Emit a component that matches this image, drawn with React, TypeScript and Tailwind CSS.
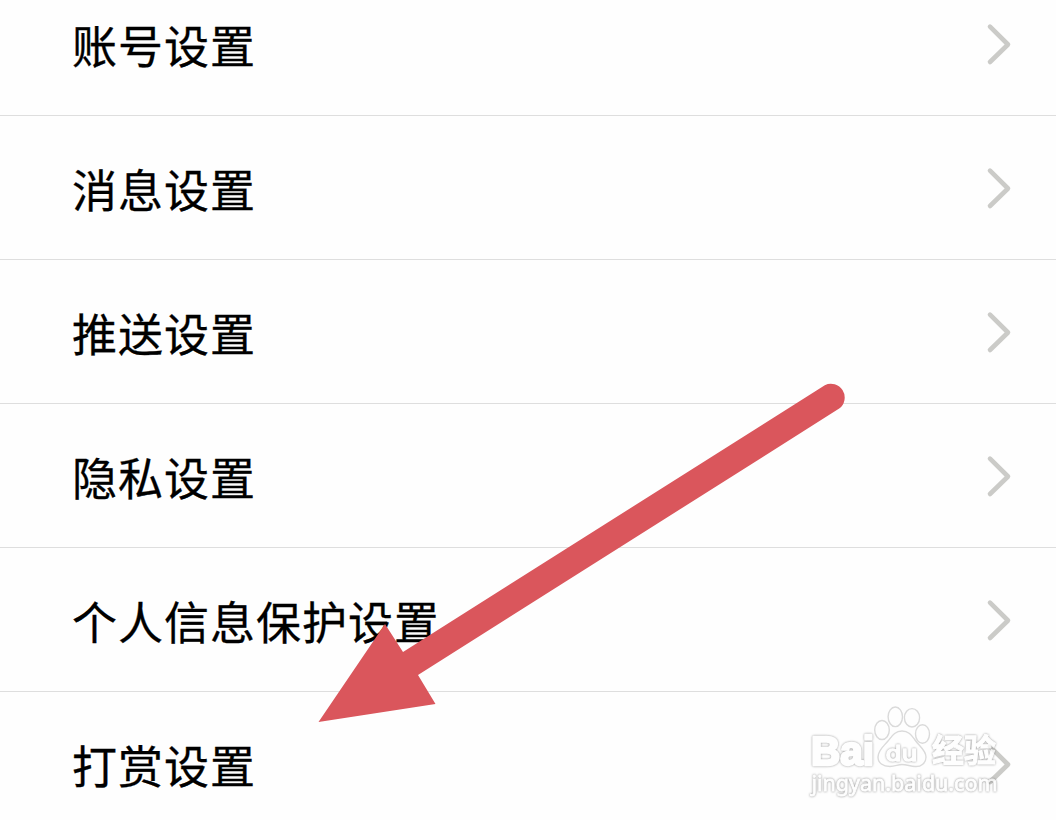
import { clsx } from "clsx";

const items = [
  "账号设置",
  "消息设置",
  "推送设置",
  "隐私设置",
  "个人信息保护设置",
  "打赏设置",
];

const Chevron = () => (
  <svg className="h-11 w-7" viewBox="0 0 28 44" fill="none">
    <path
      d="M6 4.7 L24 22.5 L6 40"
      stroke="#cbcbc8"
      strokeWidth="4.6"
      strokeLinecap="round"
      strokeLinejoin="round"
    />
  </svg>
);

const SettingRow = ({ label, last }: { label: string; last: boolean }) => (
  <button
    type="button"
    className={clsx(
      "flex h-36 w-full shrink-0 items-center justify-between border-b pl-[72px] pr-11 text-left",
      last ? "border-transparent" : "border-[#dedede]"
    )}
  >
    <span className="pt-0.5 text-[45px] leading-[60px] tracking-[1px] text-black [-webkit-text-stroke:0.3px_#000]">
      {label}
    </span>
    <Chevron />
  </button>
);

const Arrow = () => (
  <svg
    className="pointer-events-none absolute left-0 top-0 h-[820px] w-[1056px]"
    viewBox="0 0 1056 820"
  >
    <path
      d="M318.5 722 L385 624 L403 652 L824.8 385.2 A13.8 13.8 0 0 1 839.2 408.6 L418 675 L435.5 704 Z"
      fill="#da565c"
    />
  </svg>
);

const Watermark = () => (
  <svg
    className="pointer-events-none absolute left-[790px] top-[690px] h-[130px] w-[266px] opacity-75"
    viewBox="0 0 266 130"
    fill="#ffffff"
    stroke="#cecece"
    strokeWidth="1.4"
  >
    {/* Paw */}
    <ellipse cx="92" cy="40" rx="7.3" ry="9.5" />
    <ellipse cx="105.3" cy="26.8" rx="7.2" ry="9.8" />
    <ellipse cx="122" cy="27.8" rx="7.6" ry="9.2" />
    <ellipse cx="132.5" cy="44" rx="7" ry="9.3" />
    <path d="M112 41 C119 41 122 46 125 50 C129 56 136 60 136 67 C136 73 131 77 125 76.5 C120 76 116 74.5 112 74.5 C108 74.5 105 76.5 100 76.5 C93 76.5 88 73 88 67 C88 60 94 56 98 51 C102 46 105 41 112 41 Z" />

    {/* Lettering */}
    <g
      stroke="#ffffff"
      strokeLinejoin="round"
      className="[filter:drop-shadow(0_0_0.8px_#787878)]"
    >
      <text
        x="21"
        y="74.5"
        fontSize="40"
        fontWeight="700"
        textLength="63"
        lengthAdjust="spacingAndGlyphs"
        strokeWidth="2.6"
        className="font-['Liberation_Sans',sans-serif]"
      >
        Bai
      </text>
      <text
        x="95.5"
        y="71"
        fontSize="21"
        textLength="32"
        lengthAdjust="spacingAndGlyphs"
        className="font-['DejaVu_Sans',sans-serif]"
      >
        du
      </text>
      <text
        x="142"
        y="72"
        fontSize="32"
        fontWeight="700"
        strokeWidth="1"
        className="font-['Noto_Sans_CJK_SC',sans-serif]"
      >
        经验
      </text>
    </g>
    <text
      x="21.5"
      y="100.5"
      fontSize="21"
      textLength="186"
      lengthAdjust="spacingAndGlyphs"
      stroke="#ffffff"
      strokeWidth="0.8"
      className="font-['Noto_Sans',sans-serif] [filter:drop-shadow(0_0_0.8px_#666666)]"
    >
      jingyan.baidu.com
    </text>
  </svg>
);

const App = () => {
  return (
    <div className="relative h-[820px] w-[1056px] overflow-hidden bg-[#fefefe] font-['Noto_Sans_CJK_SC',sans-serif]">
      <div className="-mt-7 flex flex-col">
        {items.map((label, i) => (
          <SettingRow key={label} label={label} last={i === items.length - 1} />
        ))}
      </div>
      <Arrow />
      <Watermark />
    </div>
  );
};

export default App;
